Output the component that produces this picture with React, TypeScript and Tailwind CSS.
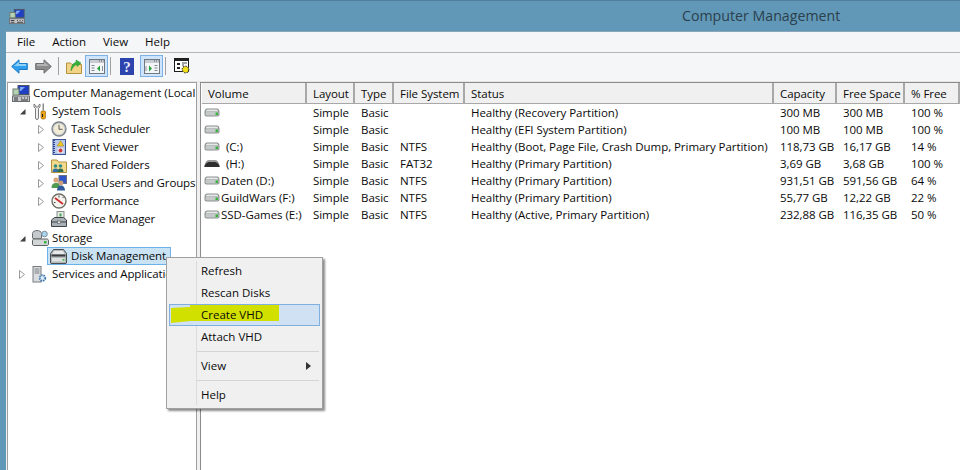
import type { ReactNode } from "react"

const COLUMNS = "grid-cols-[105px_48px_39px_71px_309px_63px_68px_1fr]"

const HEADERS = ["Volume", "Layout", "Type", "File System", "Status", "Capacity", "Free Space", "% Free"]

const VOLUMES = [
  { name: "", indent: false, fs: "", status: "Healthy (Recovery Partition)", cap: "300 MB", free: "300 MB", pct: "100 %" },
  { name: "", indent: false, fs: "", status: "Healthy (EFI System Partition)", cap: "100 MB", free: "100 MB", pct: "100 %" },
  { name: "(C:)", indent: true, fs: "NTFS", status: "Healthy (Boot, Page File, Crash Dump, Primary Partition)", cap: "118,73 GB", free: "16,17 GB", pct: "14 %" },
  { name: "(H:)", indent: true, dark: true, fs: "FAT32", status: "Healthy (Primary Partition)", cap: "3,69 GB", free: "3,68 GB", pct: "100 %" },
  { name: "Daten (D:)", indent: false, fs: "NTFS", status: "Healthy (Primary Partition)", cap: "931,51 GB", free: "591,56 GB", pct: "64 %" },
  { name: "GuildWars (F:)", indent: false, fs: "NTFS", status: "Healthy (Primary Partition)", cap: "55,77 GB", free: "12,22 GB", pct: "22 %" },
  { name: "SSD-Games (E:)", indent: false, fs: "NTFS", status: "Healthy (Active, Primary Partition)", cap: "232,88 GB", free: "116,35 GB", pct: "50 %" },
]

function DriveIcon({ dark }: { dark?: boolean }) {
  if (dark) {
    return (
      <svg width="16" height="9" viewBox="0 0 16 9" className="shrink-0">
        <path d="M0.500 6.500C1 3 3 1 5 1h6c2 0 4 2 4.500 5.500V8h-15z" fill="#9b9b9b" />
        <path d="M0.500 7C2 4 3.500 3 5 3h6c1.500 0 3 1 4.500 4v1h-15z" fill="#2e2e2e" />
      </svg>
    )
  }
  return (
    <svg width="16" height="9" viewBox="0 0 16 9" className="shrink-0">
      <path d="M3 0.500h10c1.500 0 2.500 1.500 2.500 3.500v2.500c0 1-.7 2-2 2h-11c-1.300 0-2-1-2-2V4C.5 2 1.500.5 3 .5z" fill="#8d9292" />
      <path d="M3.500 1.500h9c1 0 1.600.8 1.900 2H1.600c.3-1.200.9-2 1.900-2z" fill="#e6e8e8" />
      <rect x="1.500" y="4" width="13" height="3.500" rx="1" fill="#c5c9c9" />
      <rect x="11.500" y="4.500" width="2.500" height="2.500" fill="#37b43c" />
    </svg>
  )
}

function ComputerIcon({ small }: { small?: boolean }) {
  return (
    <svg width={small ? 16 : 18} height="17" viewBox="0 0 18 17" className="shrink-0">
      <rect x="6" y="0.500" width="11" height="9" fill="#1f3fc4" stroke="#4d5560" />
      <path d="M8 2h5l-4 4H8z" fill="#7fa8f2" />
      <rect x="1" y="4" width="6" height="6" fill="#b7d2b0" stroke="#6b7a70" />
      <rect x="0.500" y="11" width="17" height="5.500" fill="#c4c6c8" stroke="#6a6d70" />
      <path d="M2 13h4M2 15h4M9 13h1M12 13h1M15 13h1M9 15h7" stroke="#303336" />
    </svg>
  )
}

function ToolsIcon() {
  return (
    <svg width="13" height="17" viewBox="0 0 13 17" className="shrink-0">
      <path d="M1 1v3l1.500 1.500V15c0 2 3 2 3 0V5.500L7 4V1L5.300 2.500V4H2.700V2.500z" fill="#f0f0f0" stroke="#6e6e6e" strokeWidth="0.9" />
      <rect x="9.500" y="0.500" width="1.500" height="7" fill="#8c8c8c" />
      <path d="M8.500 8h3.500l.5 1v6c0 1.500-4.500 1.500-4.500 0V9z" fill="#eaa415" stroke="#8f6200" strokeWidth="0.6" />
      <path d="M9.500 11v3" stroke="#1d1d1d" />
    </svg>
  )
}

function ClockIcon() {
  return (
    <svg width="16" height="16" viewBox="0 0 16 16" className="shrink-0">
      <circle cx="8" cy="8" r="7" fill="#c9d0d4" stroke="#7f8488" strokeWidth="1.300" />
      <circle cx="8" cy="8" r="5.200" fill="#f2ecd6" />
      <path d="M8 3.800V8.300h3.500" fill="none" stroke="#5b5b5b" />
    </svg>
  )
}

function EventIcon() {
  return (
    <svg width="14" height="16" viewBox="0 0 14 16" className="shrink-0">
      <rect x="1" y="0.500" width="12.500" height="15" fill="#b9c7ea" stroke="#3a5596" />
      <path d="M2 1v14" stroke="#24428f" strokeWidth="2" strokeDasharray="1 1" />
      <path d="M8.500 1.800l3.200 5.200H5.300z" fill="#f4cf22" stroke="#9c7b00" strokeWidth="0.500" />
      <rect x="5.500" y="9" width="6" height="5" fill="#e7e9ef" />
      <circle cx="8.500" cy="11.500" r="2" fill="#cf3c3c" />
    </svg>
  )
}

function SharedIcon() {
  return (
    <svg width="16" height="15" viewBox="0 0 16 15" className="shrink-0">
      <path d="M.5 2h5.500l1.500 2h8v10.500H.5z" fill="#f3d98b" stroke="#b3923e" />
      <circle cx="4.500" cy="8" r="1.800" fill="#2f8f88" />
      <path d="M1.500 14c0-2.500 1-3.500 3-3.500s3 1 3 3.500z" fill="#356fa8" />
      <circle cx="9.500" cy="8" r="1.800" fill="#2f8f88" />
      <path d="M6.500 14c0-2.500 1-3.500 3-3.500s3 1 3 3.500z" fill="#2f6f4f" />
    </svg>
  )
}

function UsersIcon() {
  return (
    <svg width="16" height="16" viewBox="0 0 16 16" className="shrink-0">
      <rect x="8" y="0.500" width="7.500" height="8" fill="#2f55c8" stroke="#6a7080" />
      <circle cx="5" cy="5" r="2.600" fill="#d9a777" />
      <path d="M.5 13c0-3.500 1.500-5 4.500-5s4 1.500 4 5z" fill="#4e9a4e" />
      <circle cx="10" cy="8" r="2.400" fill="#caa07a" />
      <path d="M6 15.500c0-3 1.500-5 4-5s4 2 4 5z" fill="#2f5a9c" />
    </svg>
  )
}

function GaugeIcon() {
  return (
    <svg width="16" height="16" viewBox="0 0 16 16" className="shrink-0">
      <circle cx="8" cy="8" r="7" fill="#f6f4ee" stroke="#6f6f68" strokeWidth="1.400" />
      <path d="M4 5l8 6" stroke="#cc2a2a" strokeWidth="1.700" />
      <path d="M8 2.500v2M3 9.500h1.500M11.500 5l1-1" stroke="#444" />
    </svg>
  )
}

function DeviceIcon() {
  return (
    <svg width="16" height="16" viewBox="0 0 16 16" className="shrink-0">
      <rect x="6" y="0.500" width="7" height="7" fill="#e3eae4" stroke="#8a8f8a" />
      <rect x="8.500" y="2.500" width="2" height="3" fill="#4ea35a" />
      <path d="M.5 9l3-2.500h9l3 2.500v6.500H.5z" fill="#a9b0b6" stroke="#3f4448" />
      <path d="M1 11h14" stroke="#3f4448" />
      <rect x="6.500" y="10" width="3" height="2.500" fill="#e3e5e6" stroke="#3f4448" strokeWidth="0.500" />
    </svg>
  )
}

function StorageIcon() {
  return (
    <svg width="17" height="16" viewBox="0 0 17 16" className="ml-[2px] shrink-0">
      <path d="M.5 3.500C.5 1.500 3 .5 5 .5s4.500 1 4.500 3V8c0 1.300-9 1.300-9 0z" fill="#c4cace" stroke="#676c70" />
      <circle cx="12.500" cy="4" r="2.800" fill="#a8d4ec" stroke="#7c8e9c" />
      <path d="M2 9h13c1 0 1.500.8 1.500 2v3c0 1-.7 1.500-1.500 1.500H2c-1 0-1.500-.5-1.500-1.500v-3C.5 9.800 1 9 2 9z" fill="#d3d6d6" stroke="#5d6161" />
      <rect x="12" y="11" width="2.500" height="2.500" fill="#37b43c" />
    </svg>
  )
}

function DiskMgmtIcon() {
  return (
    <svg width="17" height="15" viewBox="0 0 17 15" className="shrink-0">
      <path d="M3.500 .5h10l3 4V14l-.5.5H1l-.5-.5V4.500z" fill="#b4b8ba" stroke="#4a4e50" />
      <path d="M4 2h9l1.500 3h-12z" fill="#e8eaea" />
      <path d="M1.500 5.500h14v2h-14z" fill="#3a3d3f" />
      <path d="M2 9h13v3.500H2z" fill="#dfe1e2" />
      <rect x="12.500" y="10" width="2" height="1.500" fill="#37b43c" />
    </svg>
  )
}

function ServicesIcon() {
  return (
    <svg width="15" height="17" viewBox="0 0 15 17" className="shrink-0">
      <rect x="1" y="0.500" width="8" height="15.500" fill="#dadde0" stroke="#777b7f" />
      <path d="M2.500 3h5M2.500 5h5M2.500 7h5" stroke="#7d8184" />
      <circle cx="10.500" cy="12" r="2.800" fill="#dceaf6" stroke="#3f78ad" strokeWidth="1.800" strokeDasharray="1.500 0.800" />
    </svg>
  )
}

function TreeArrow({ open }: { open?: boolean }) {
  if (open) {
    return (
      <svg width="7" height="7" viewBox="0 0 7 7" className="shrink-0">
        <path d="M6.500 1v5.500H1z" fill="#404040" />
      </svg>
    )
  }
  return (
    <svg width="6" height="9" viewBox="0 0 6 9" className="shrink-0">
      <path d="M0.500 0.500l5 4-5 4z" fill="#fff" stroke="#9a9a9a" />
    </svg>
  )
}

type TreeRowProps = {
  level: 1 | 2
  arrow?: "open" | "closed"
  icon: ReactNode
  label: string
  selected?: boolean
}

function TreeRow({ level, arrow, icon, label, selected }: TreeRowProps) {
  return (
    <div className={`flex h-[18px] items-center tracking-[-0.13px] ${level === 1 ? "pl-[11px]" : "pl-[30px]"}`}>
      <span className="flex w-[12px] shrink-0 items-center">
        {arrow && <TreeArrow open={arrow === "open"} />}
      </span>
      <span
        className={`flex h-[18px] items-center gap-[4px] whitespace-nowrap ${
          selected ? "-ml-[3px] border border-[#6cb2e6] bg-[#c9e3f4] pr-[4px] pl-[2px]" : ""
        }`}
      >
        <span className="flex w-[17px] justify-center">{icon}</span>
        {label}
      </span>
    </div>
  )
}

function Tree() {
  return (
    <div className="w-[190px] shrink-0 overflow-hidden border border-b-0 border-[#a0a0a0] bg-white pt-px">
      <div className="flex h-[18px] items-center gap-[3px] whitespace-nowrap pl-[4px]">
        <ComputerIcon />
        Computer Management (Local
      </div>
      <TreeRow level={1} arrow="open" icon={<ToolsIcon />} label="System Tools" />
      <TreeRow level={2} arrow="closed" icon={<ClockIcon />} label="Task Scheduler" />
      <TreeRow level={2} arrow="closed" icon={<EventIcon />} label="Event Viewer" />
      <TreeRow level={2} arrow="closed" icon={<SharedIcon />} label="Shared Folders" />
      <TreeRow level={2} arrow="closed" icon={<UsersIcon />} label="Local Users and Groups" />
      <TreeRow level={2} arrow="closed" icon={<GaugeIcon />} label="Performance" />
      <TreeRow level={2} icon={<DeviceIcon />} label="Device Manager" />
      <div className="mt-px">
        <TreeRow level={1} arrow="open" icon={<StorageIcon />} label="Storage" />
        <TreeRow level={2} icon={<DiskMgmtIcon />} label="Disk Management" selected />
        <TreeRow level={1} arrow="closed" icon={<ServicesIcon />} label="Services and Applications" />
      </div>
    </div>
  )
}

function VolumeList() {
  return (
    <div className="min-w-0 flex-1 border-t border-l border-[#8c8c8c] bg-white tracking-[-0.05px]">
      <div className={`grid h-[21px] ${COLUMNS} pl-[1px]`}>
        {HEADERS.map((h) => (
          <div
            key={h}
            className="flex items-center border-r-2 border-b border-[#a8a8a8] bg-[#f0f0f0] pt-[2px] pl-[6px] whitespace-nowrap"
          >
            {h}
          </div>
        ))}
      </div>
      {VOLUMES.map((v, i) => (
        <div key={i} className={`grid h-[17px] ${COLUMNS} items-center whitespace-nowrap pl-[1px]`}>
          <div className="flex items-center pl-[2px]">
            <DriveIcon dark={v.dark} />
            <span className={v.indent ? "ml-[6px]" : "ml-[1px]"}>{v.name}</span>
          </div>
          <div className="pl-[6px]">Simple</div>
          <div className="pl-[6px]">Basic</div>
          <div className="pl-[6px]">{v.fs}</div>
          <div className="pl-[6px]">{v.status}</div>
          <div className="pl-[6px]">{v.cap}</div>
          <div className="pl-[6px]">{v.free}</div>
          <div className="pl-[6px]">{v.pct}</div>
        </div>
      ))}
    </div>
  )
}

function MenuItem({ label, highlight, arrow }: { label: string; highlight?: boolean; arrow?: boolean }) {
  return (
    <div
      className={`relative mx-[2px] flex h-[22px] items-center ${
        highlight ? "border border-[#7fb0e0] bg-[#cfe1f2] pl-[31px]" : "pl-[32px]"
      }`}
    >
      {highlight && (
        // marker stroke drawn over the item in the screenshot
        <svg width="110" height="18" viewBox="0 0 110 18" className="absolute left-0 top-0">
          <path d="M1 3L20 2V0H109V16H20L1 18Z" fill="#d2e000" />
        </svg>
      )}
      <span className="relative">{label}</span>
      {arrow && (
        <svg width="5" height="8" viewBox="0 0 5 8" className="absolute right-[9px] top-[7px]">
          <path d="M0 0l5 4-5 4z" fill="#333" />
        </svg>
      )}
    </div>
  )
}

function ContextMenu() {
  return (
    <div className="absolute left-[166px] top-[257px] h-[152px] w-[157px] border border-[#a0a0a0] bg-[#f0f0f0] py-[2px] shadow-[2px_2px_2px_rgba(0,0,0,0.45)]">
      <div className="absolute bottom-[3px] left-[29px] top-[3px] w-px bg-[#dcdcdc]" />
      <MenuItem label="Refresh" />
      <MenuItem label="Rescan Disks" />
      <MenuItem label="Create VHD" highlight />
      <MenuItem label="Attach VHD" />
      <div className="my-[3px] mr-[3px] ml-[30px] h-px bg-[#d4d4d4]" />
      <MenuItem label="View" arrow />
      <div className="my-[3px] mr-[3px] ml-[30px] h-px bg-[#d4d4d4]" />
      <MenuItem label="Help" />
    </div>
  )
}

function ToolButton({ active, children }: { active?: boolean; children: ReactNode }) {
  return (
    <div
      className={`flex h-[22px] w-[23px] items-center justify-center ${
        active ? "border border-[#7db1e6] bg-[#cde4fb]" : ""
      }`}
    >
      {children}
    </div>
  )
}

function PaneIcon({ right }: { right?: boolean }) {
  return (
    <svg width="16" height="15" viewBox="0 0 16 15">
      <rect x="0.500" y="0.500" width="15" height="14" fill="#f4f5f6" stroke="#6f7780" />
      <path d="M1 1h14v3H1z" fill="#c8ccd2" />
      <path d="M10 2h1M12 2h1M14 2h.5" stroke="#555" />
      {right ? (
        <>
          <path d="M5 6.500l3 3-3 3z" fill="#22a33a" />
          <path d="M2 7v5" stroke="#8a9099" />
          <path d="M10.500 6.500h3M10.500 9h3M10.500 11.500h3" stroke="#7d8590" />
        </>
      ) : (
        <>
          <path d="M2.500 6.500h3M2.500 9h3M2.500 11.500h3" stroke="#7d8590" />
          <path d="M11 6.500l-3 3 3 3z" fill="#22a33a" />
          <path d="M13.500 7v5" stroke="#8a9099" />
        </>
      )}
    </svg>
  )
}

function Separator({ className }: { className: string }) {
  return <div className={`h-[18px] w-px bg-[#a0a0a0] ${className}`} />
}

function Toolbar() {
  return (
    <div className="flex h-[29px] items-center border-b border-[#e4e5e6] pb-[2px] pl-[5px]">
      <svg width="17" height="15" viewBox="0 0 17 15" className="mr-[7px]">
        <path d="M.7 7.500L8 .8V4.500h8.300v6H8v3.700z" fill="#2f9fee" stroke="#1e78c2" />
        <path d="M3 7L8 3v2h7v2z" fill="#8fd2fa" />
      </svg>
      <svg width="17" height="15" viewBox="0 0 17 15" className="mr-[6px]">
        <path d="M16.300 7.500L9 .8V4.500H.7v6H9v3.700z" fill="#8c8c8c" stroke="#6f6f6f" />
        <path d="M14 7L9 3v2H2v2z" fill="#b4b4b4" />
      </svg>
      <Separator className="mr-[7px]" />
      <svg width="16" height="16" viewBox="0 0 16 16" className="mr-[3px]">
        <path d="M.5 5h4l1.500 1.500h9.500v9H.5z" fill="#f3d486" stroke="#b3923e" />
        <path d="M5 13C5 8 7 5 10 4.500V2l5 3-4 3.500V6.500C8.500 7 7 9 5 13z" fill="#36b33c" stroke="#228a2c" strokeWidth="0.500" />
      </svg>
      <ToolButton active>
        <PaneIcon />
      </ToolButton>
      <Separator className="mr-[4px] ml-[2px]" />
      <ToolButton>
        <svg width="14" height="17" viewBox="0 0 14 17">
          <rect width="14" height="17" fill="#2d43ad" />
          <text x="7" y="14" textAnchor="middle" fontSize="15" fontWeight="700" fill="#e8ecff" fontFamily="Liberation Serif, serif">
            ?
          </text>
        </svg>
      </ToolButton>
      <div className="ml-[2px]">
        <ToolButton active>
          <PaneIcon right />
        </ToolButton>
      </div>
      <Separator className="mr-[8px] ml-[2px]" />
      <svg width="16" height="16" viewBox="0 0 16 16">
        <rect x="0.500" y="0.500" width="14" height="13" fill="#fff" stroke="#1c1c1c" />
        <path d="M1 1h13v2H1zM3 5h3v2H3zM3 9h3v2H3z" fill="#222" />
        <path d="M8 5h5M8 7h2" stroke="#444" />
        <circle cx="11.500" cy="11.500" r="3.300" fill="#f4e01a" stroke="#3a3a3a" strokeWidth="1.200" strokeDasharray="1.500 1" />
      </svg>
    </div>
  )
}

export default function App() {
  return (
    <div className="relative flex h-[470px] w-[960px] flex-col overflow-hidden bg-[#6198b7] font-['Open_Sans','Noto_Sans',sans-serif] text-[11.5px] text-[#0a0a0a]">
      <div className="flex h-[31px] shrink-0 items-center border-t border-[#4f7f9b] pl-[9px]">
        <ComputerIcon small />
        <div className="flex-1 pl-[657px] text-[14.2px] text-[#2b3f4d]">Computer Management</div>
      </div>
      <div className="ml-[6px] flex min-h-0 flex-1 flex-col border-t border-[#8aa6b8] bg-[#f5f6f7]">
        <div className="flex h-[21px] items-center gap-[17px] border-b border-[#b5b5b5] pl-[11px]">
          <span>File</span>
          <span>Action</span>
          <span>View</span>
          <span>Help</span>
        </div>
        <Toolbar />
        <div className="flex min-h-0 flex-1 gap-[3px] bg-[#f0f0f0] pl-px">
          <Tree />
          <VolumeList />
        </div>
      </div>
      <ContextMenu />
    </div>
  )
}
